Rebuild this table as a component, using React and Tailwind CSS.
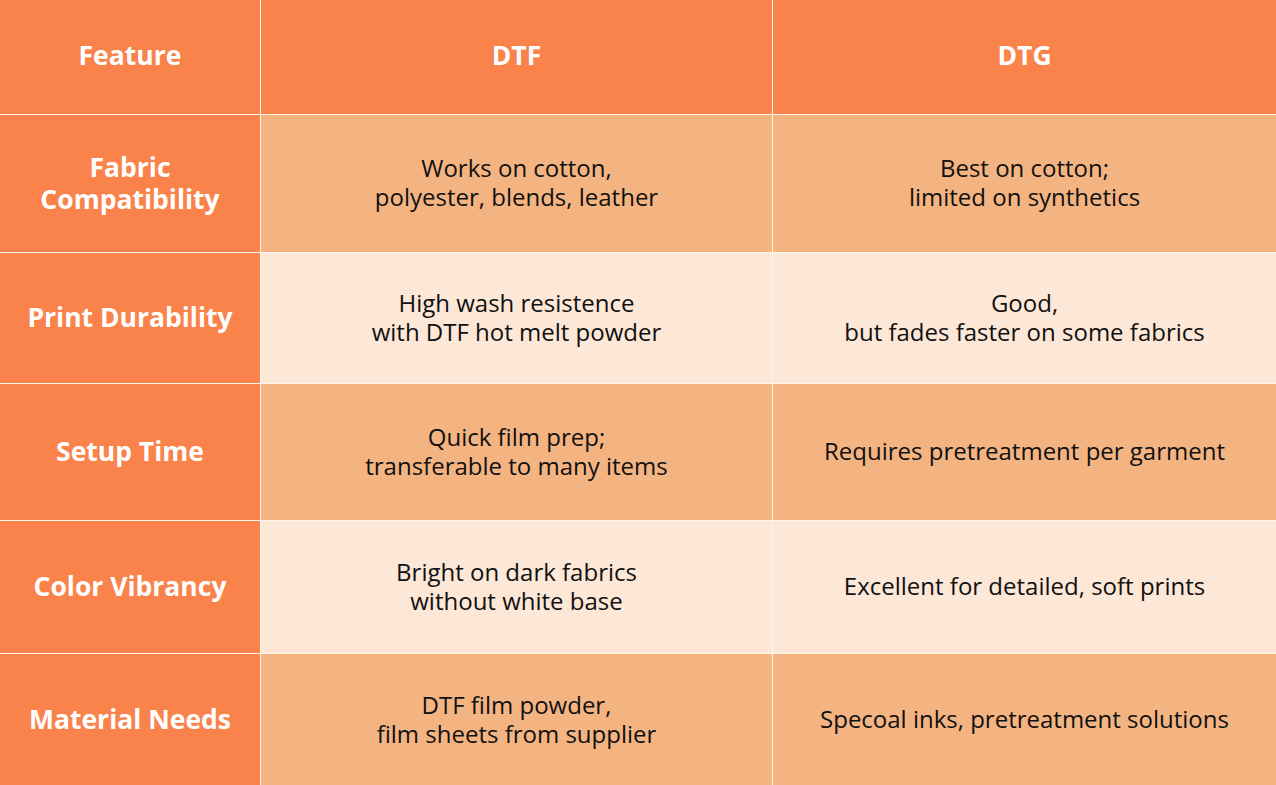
const rows = [
  {
    h: "h-[137px]",
    bg: "bg-[#f4b482]",
    feature: ["Fabric", "Compatibility"],
    dtf: ["Works on cotton,", "polyester, blends, leather"],
    dtg: ["Best on cotton;", "limited on synthetics"],
  },
  {
    h: "h-[130px]",
    bg: "bg-[#fde7d6]",
    feature: ["Print Durability"],
    dtf: ["High wash resistence", "with DTF hot melt powder"],
    dtg: ["Good,", "but fades faster on some fabrics"],
  },
  {
    h: "h-[136px]",
    bg: "bg-[#f4b482]",
    feature: ["Setup Time"],
    dtf: ["Quick film prep;", "transferable to many items"],
    dtg: ["Requires pretreatment per garment"],
  },
  {
    h: "h-[132px]",
    bg: "bg-[#fde7d6]",
    feature: ["Color Vibrancy"],
    dtf: ["Bright on dark fabrics", "without white base"],
    dtg: ["Excellent for detailed, soft prints"],
  },
  {
    h: "h-[132px]",
    bg: "bg-[#f4b482]",
    feature: ["Material Needs"],
    dtf: ["DTF film powder,", "film sheets from supplier"],
    dtg: ["Specoal inks, pretreatment solutions"],
  },
];

// one text block per cell, lines split with <br />
function Lines({ lines }) {
  return (
    <p>
      {lines.map((l, i) => (
        <span key={i}>
          {i > 0 && <br />}
          {l}
        </span>
      ))}
    </p>
  );
}

export default function App() {
  return (
    <div
      className="w-[1276px] h-[785px] overflow-hidden bg-[#fff6ea] flex flex-col gap-px"
      style={{ fontFamily: '"Open Sans", "Noto Sans", sans-serif' }}
    >
      {/* Header */}
      <div className="grid grid-cols-[260px_511px_1fr] gap-px h-[114px] shrink-0">
        {["Feature", "DTF", "DTG"].map((t) => (
          <div
            key={t}
            className="bg-[#f9834a] flex items-center justify-center text-white font-bold text-[26.5px] pb-[2px]"
          >
            {t}
          </div>
        ))}
      </div>

      {rows.map((r, i) => (
        <div key={i} className={`grid grid-cols-[260px_511px_1fr] gap-px shrink-0 ${r.h}`}>
          <div className="bg-[#f9834a] flex items-center justify-center text-center text-white font-bold text-[26.5px] leading-[32px] pb-[2px]">
            <Lines lines={r.feature} />
          </div>
          <div className={`${r.bg} flex items-center justify-center text-center text-[#111] text-[24px] leading-[29px] pb-[3px]`}>
            <Lines lines={r.dtf} />
          </div>
          <div className={`${r.bg} flex items-center justify-center text-center text-[#111] text-[24px] leading-[29px] pb-[3px]`}>
            <Lines lines={r.dtg} />
          </div>
        </div>
      ))}
    </div>
  );
}
